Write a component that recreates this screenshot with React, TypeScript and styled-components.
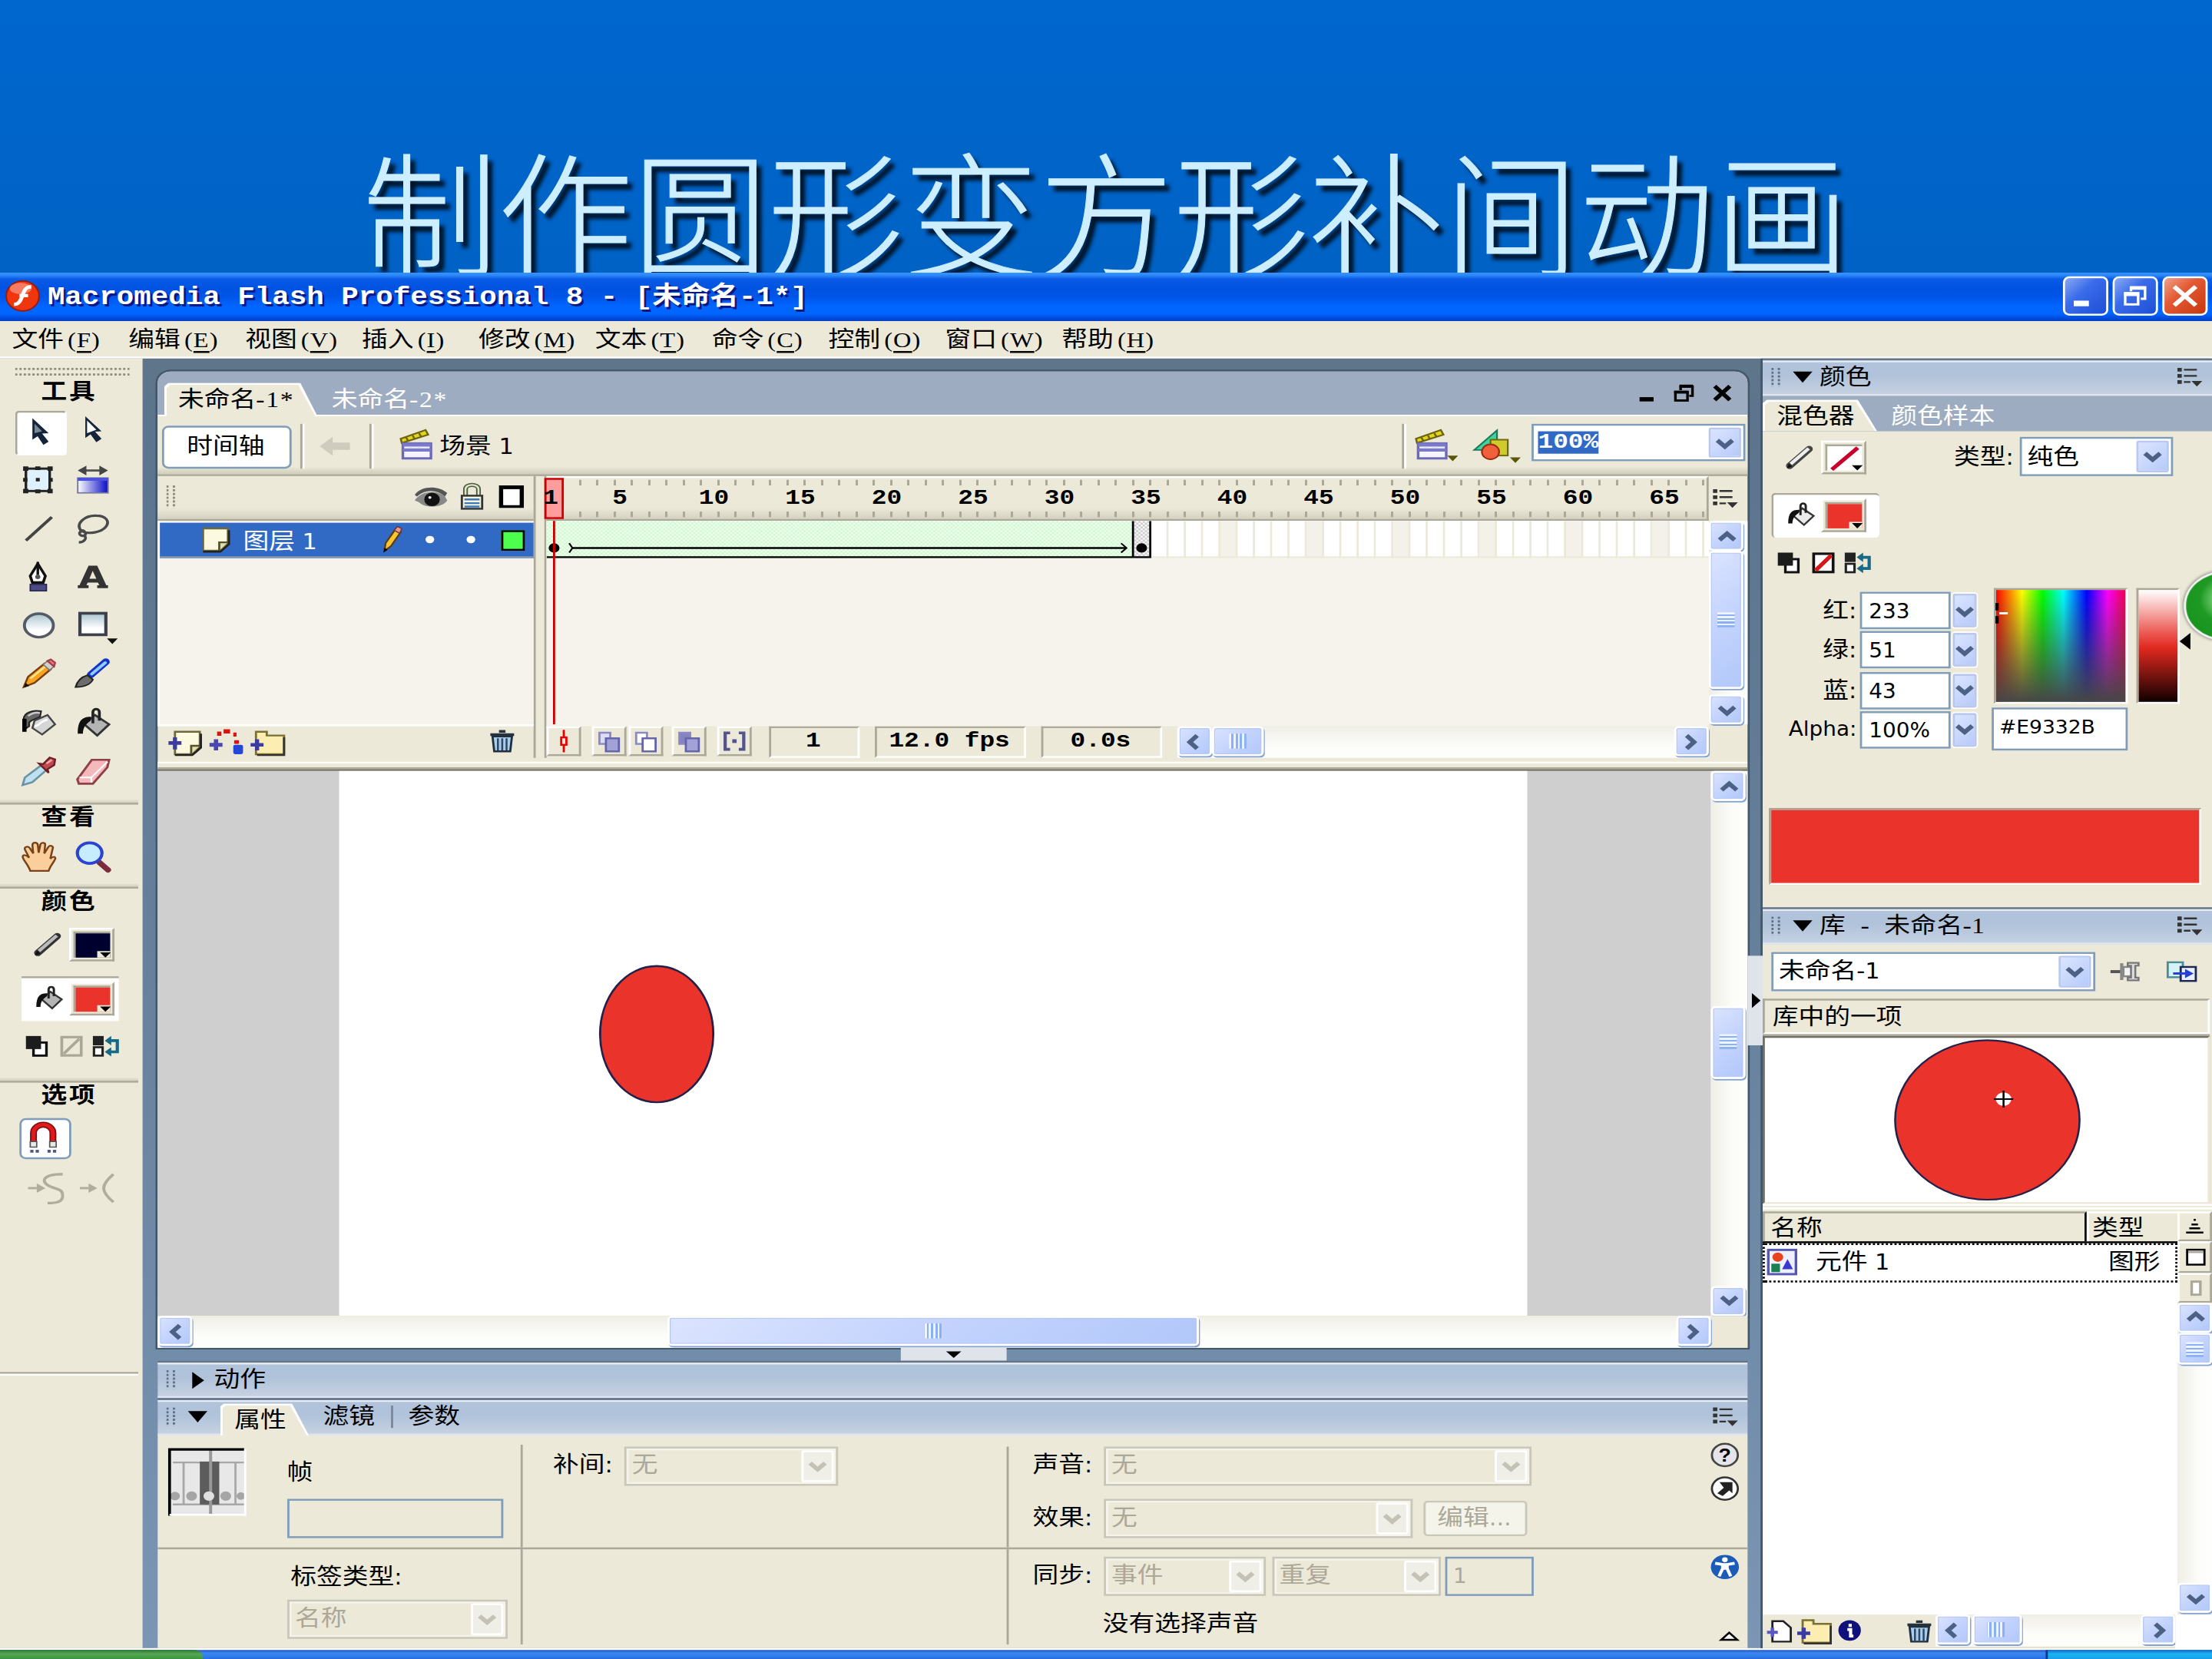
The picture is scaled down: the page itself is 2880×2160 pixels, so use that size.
import React from 'react';
import styled, { createGlobalStyle, css } from 'styled-components';

const Color = {
    Face: '#ece9d8',
    Line: '#aca899',
    Dark: '#716f64',
    Paper: '#f6f3ec',
    Field: '#7f9db9',
    Tab: '#9dacc0',
    Select: '#316ac5',
    Red: '#e9332b',
    Chevron: '#4d6185',
    Stage: '#cfcfcf',
};

const Font = {
    song: '"Liberation Serif", "Noto Sans CJK SC", sans-serif',
    tahoma: '"DejaVu Sans Condensed", "DejaVu Sans", "Noto Sans CJK SC", sans-serif',
    mono: '"Liberation Mono", "Noto Sans CJK SC", monospace',
};

const GlobalStyle = createGlobalStyle`
    html, body { margin: 0; padding: 0; overflow: hidden; background: #0066cc; }
    *, *::before, *::after { box-sizing: border-box; }
    svg { display: block; flex-shrink: 0; overflow: visible; }
`;

/* ---------- slide ---------- */

const Slide = styled.div`
    width: 2880px;
    height: 2160px;
    overflow: hidden;
    background: linear-gradient(#0067cf, #0062c4 355px);
`;

const Heading = styled.h1`
    margin: 0;
    height: 355px;
    padding-top: 177px;
    overflow: hidden;
    text-align: center;
    white-space: nowrap;
    color: #cceeff;
    font: 300 176px/190px "Noto Sans CJK SC", sans-serif;
    -webkit-text-stroke: 1px #cceeff;
    text-shadow: 7px 8px 5px #001428;
`;

// The desktop keeps its native 1024px grid and is stretched to fill the slide.
const Desktop = styled.div`
    width: 1024px;
    height: 768px;
    transform: scale(2.8125, 2.43);
    transform-origin: 0 0;
    display: flex;
    flex-direction: column;
    font: 400 12px/14px ${Font.song};
    color: #000;
    white-space: nowrap;
    background: ${Color.Face};
`;

/* ---------- title and menu ---------- */

const TitleBar = styled.div`
    height: 26px;
    flex-shrink: 0;
    display: flex;
    align-items: center;
    padding: 0 2px 1px 2px;
    background: linear-gradient(#3a93ff 0, #2a86f8 1.5px, #0a5be6 3.5px, #0053e1 8px, #0055e8 13px, #0066ff 18px, #0066ff 22px, #0046d5 25px, #003dc9 26px);
`;

const TitleText = styled.div`
    flex: 1;
    padding: 2px 0 0 4px;
    color: #fff;
    font: 700 13.34px/16px ${Font.mono};
    text-shadow: 1px 1px 0 #0a1883;
`;

const CaptionButton = styled.div<{ $close?: boolean }>`
    width: 21px;
    height: 21px;
    margin-left: 2px;
    border: 1px solid #fff;
    border-radius: 3px;
    display: flex;
    align-items: center;
    justify-content: center;
    background: ${p => (p.$close
        ? 'linear-gradient(135deg, #f0a088, #e35a34 40%, #c8380f)'
        : 'linear-gradient(135deg, #8aa9f4, #3a6cea 40%, #1d4ed6)')};
`;

const MenuBar = styled.div`
    height: 20px;
    flex-shrink: 0;
    display: flex;
    align-items: center;
    padding-left: 5.5px;
    border-bottom: 1px solid #fff;
    background: ${Color.Face};
`;

const MenuItem = styled.div`
    width: 54px;
    line-height: 16px;
`;

const Hotkey = styled.span`
    margin-left: 1.8px;
    letter-spacing: 0.4px;
    font-size: 11.5px;
    u { text-underline-offset: 1.5px; }
`;

/* ---------- shared parts ---------- */

const Body = styled.div`
    height: 690.5px;
    flex-shrink: 0;
    display: flex;
    background: linear-gradient(#5f7589, #5c748d 5%, #66809b 45%, #7a96b4);
`;

const Grip = styled.div<{ $w: number; $h: number; $pale?: boolean }>`
    width: ${p => p.$w}px;
    height: ${p => p.$h}px;
    flex-shrink: 0;
    background:
        radial-gradient(circle at 0.5px 0.5px, ${p => (p.$pale ? '#5f6f86' : '#8f8c7c')} 0.6px, transparent 0.7px) 0 0 /
        ${p => (p.$w > p.$h ? '2px 3px' : '3px 2px')};
`;

const Bold = styled.div`
    font-weight: 700;
    letter-spacing: 1px;
    text-align: center;
`;

const scrollSkin = css`
    border: 1px solid #fff;
    border-radius: 2px;
    background: linear-gradient(135deg, #dbe4ff, #c3d3fd 50%, #b2c8fa);
    box-shadow: inset 0 0 0 0.5px #b6c8f4, 0.5px 0.8px 0 #86a3d6;
    display: flex;
    align-items: center;
    justify-content: center;
    flex-shrink: 0;
`;

const Track = styled.div<{ $vertical?: boolean; $size: number; $length?: number }>`
    display: flex;
    flex-direction: ${p => (p.$vertical ? 'column' : 'row')};
    flex-shrink: 0;
    width: ${p => (p.$vertical ? `${p.$size}px` : p.$length ? `${p.$length}px` : 'auto')};
    height: ${p => (p.$vertical ? (p.$length ? `${p.$length}px` : 'auto') : `${p.$size}px`)};
    background: linear-gradient(${p => (p.$vertical ? 'to right' : 'to bottom')}, #efeee6, #fcfcf9 60%, #fefefc);
`;

const ScrollButton = styled.div`
    ${scrollSkin}
    width: 16px;
    height: 16px;
`;

const Thumb = styled.div<{ $vertical?: boolean; $size: number }>`
    ${scrollSkin}
    width: ${p => (p.$vertical ? 16 : p.$size)}px;
    height: ${p => (p.$vertical ? p.$size : 16)}px;
`;

const ThumbMark = styled.div<{ $vertical?: boolean }>`
    width: 8px;
    height: 8px;
    background: repeating-linear-gradient(${p => (p.$vertical ? 'to bottom' : 'to right')}, #eef4fe 0 1px, #8cb0f8 1px 2px);
`;

const Space = styled.div<{ $size?: number }>`
    flex: ${p => (p.$size === undefined ? '1' : `0 0 ${p.$size}px`)};
`;

const Chevron = ({ dir = 'down', color = Color.Chevron }: { dir?: string; color?: string }) => {
    const turn = { down: 0, left: 90, up: 180, right: 270 }[dir];
    return (
        <svg width="9" height="9" viewBox="0 0 9 9">
            <path
                d="M1 2.8 L4.5 6.2 L8 2.8"
                fill="none"
                stroke={color}
                strokeWidth="2.2"
                transform={`rotate(${turn} 4.5 4.5)`}
            />
        </svg>
    );
};

interface ScrollBarProps {
    vertical?: boolean
    size?: number
    length?: number
    before: number
    thumb: number
}

const ScrollBar = ({ vertical, size = 17, length, before, thumb }: ScrollBarProps) => (
    <Track $vertical={vertical} $size={size} $length={length}>
        <ScrollButton><Chevron dir={vertical ? 'up' : 'left'} /></ScrollButton>
        <Space $size={before} />
        <Thumb $vertical={vertical} $size={thumb}><ThumbMark $vertical={vertical} /></Thumb>
        <Space />
        <ScrollButton><Chevron dir={vertical ? 'down' : 'right'} /></ScrollButton>
    </Track>
);

const ComboBox = styled.div<{ $w: number; $h: number; $disabled?: boolean }>`
    width: ${p => p.$w}px;
    height: ${p => p.$h}px;
    flex-shrink: 0;
    display: flex;
    align-items: center;
    justify-content: space-between;
    padding: 0 1px 0 2.5px;
    border: 1px solid ${p => (p.$disabled ? '#c9c7ba' : Color.Field)};
    color: ${p => (p.$disabled ? Color.Line : '#000')};
    background: ${p => (p.$disabled ? Color.Face : '#fff')};
    box-shadow: ${p => (p.$disabled ? 'inset 0 0 0 1px #f5f3ea' : 'none')};
    font-family: ${Font.tahoma};
`;

const ComboArrow = styled.div<{ $disabled?: boolean }>`
    width: 15px;
    height: calc(100% - 2px);
    display: flex;
    align-items: center;
    justify-content: center;
    border-radius: 1px;
    border: ${p => (p.$disabled ? '1px solid #fff' : '0.5px solid #b8c8f0')};
    background: ${p => (p.$disabled ? '#f0efe7' : 'linear-gradient(135deg, #dbe5ff, #b6cafa)')};
`;

interface ComboProps {
    w: number
    h?: number
    disabled?: boolean
    children: React.ReactNode
}

const Combo = ({ w, h = 21, disabled, children }: ComboProps) => (
    <ComboBox $w={w} $h={h} $disabled={disabled}>
        <span>{children}</span>
        <ComboArrow $disabled={disabled}><Chevron color={disabled ? '#c4c2b5' : Color.Chevron} /></ComboArrow>
    </ComboBox>
);

const Input = styled.div<{ $w: number; $h: number; $disabled?: boolean; $font?: number }>`
    width: ${p => p.$w}px;
    height: ${p => p.$h}px;
    flex-shrink: 0;
    padding: 2px 0 0 3px;
    border: 1px solid ${Color.Field};
    background: ${p => (p.$disabled ? Color.Face : '#fff')};
    color: ${p => (p.$disabled ? Color.Line : '#000')};
    font: 400 ${p => p.$font || 11}px/15px ${Font.tahoma};
`;

const PanelMenu = () => (
    <svg width="12" height="10" viewBox="0 0 12 10">
        <path d="M0 0h2v2H0zM0 3.3h2v2H0zM0 6.6h2v2H0zM3 .5h6v1H3zM3 3.8h6v1H3zM3 7.1h3v1H3zM6.5 7h5L9 10z" fill="#333" />
    </svg>
);

const TabShape = styled.div<{ $w: number; $h: number; $slope: number }>`
    position: relative;
    z-index: 0;
    width: ${p => p.$w}px;
    height: ${p => p.$h}px;
    flex-shrink: 0;
    padding: 1.5px 0 0 6.5px;
    &::before, &::after {
        content: '';
        position: absolute;
        z-index: -1;
        inset: 0;
        background: #fff;
        clip-path: polygon(0 2px, 2px 0, calc(100% - ${p => p.$slope}px) 0, 100% 100%, 0 100%);
    }
    &::after {
        inset: 1px 1px 0 1px;
        background: ${Color.Face};
    }
`;

/* ---------- toolbox ---------- */

const ToolPanel = styled.div`
    width: 66px;
    padding-top: 5px;
    background: ${Color.Face};
    display: flex;
    flex-direction: column;
    flex-shrink: 0;
`;

const ToolGrip = styled.div`
    padding: 0 0 0 7px;
    height: 6px;
`;

const ToolTitle = styled(Bold)`
    height: 14px;
    width: 64px;
    line-height: 15.6px;
`;

const ToolGrid = styled.div`
    display: grid;
    grid-template-columns: 24px 24px;
    grid-auto-rows: 24px;
    gap: 2px 1px;
    padding: 3px 0 0 7px;
`;

const ToolCell = styled.div<{ $active?: boolean }>`
    display: flex;
    align-items: center;
    justify-content: center;
    padding: 0 1.2px 1.2px 0;
    border-radius: 2px;
    border: 1px solid transparent;
    ${p => p.$active && css`
        background: #fff;
        border-color: #aca899 #fff #fff #aca899;
    `}
`;

const Divider = styled.div<{ $gap: number }>`
    width: 64px;
    height: 3.5px;
    flex-shrink: 0;
    margin-top: ${p => p.$gap}px;
    border-bottom: 1px solid ${Color.Line};
    background: linear-gradient(${Color.Face}, #d3cfbf);
`;

const SwatchRow = styled.div<{ $active?: boolean; $w?: number; $left?: number; $pad?: number; $h?: number; $round?: boolean }>`
    display: flex;
    align-items: center;
    gap: 3px;
    width: ${p => p.$w || 45}px;
    height: ${p => p.$h || 24}px;
    margin-left: ${p => p.$left || 10}px;
    padding-left: ${p => p.$pad || 5.5}px;
    padding-bottom: 1px;
    border-top: 1px solid ${p => (p.$active ? Color.Line : 'transparent')};
    border-left: ${p => (p.$round ? `1px solid ${p.$active ? Color.Line : 'transparent'}` : '0')};
    border-radius: ${p => (p.$round ? 2 : 0)}px;
    background: ${p => (p.$active ? '#fff' : 'transparent')};
`;

const SwatchFrame = styled.div`
    width: 21px;
    height: 18px;
    padding: 1px;
    border: 1px solid;
    border-color: #fff ${Color.Line} ${Color.Line} #fff;
    background: ${Color.Face};
    svg { border-top: 1px solid ${Color.Line}; border-left: 1px solid ${Color.Line}; }
`;

const Swatch = ({ color, none }: { color?: string; none?: boolean }) => (
    <SwatchFrame>
        <svg width="17" height="14" viewBox="0 0 16 13">
            <rect width="16" height="13" fill={color || '#fff'} />
            {none && <path d="M2 12.5L14 .8" stroke="#c8002a" strokeWidth="2" />}
            <path d="M10 13V9.5h6V13z" fill={none ? '#fff' : Color.Face} />
            <path d="M11.3 10.2h5L13.8 13z" fill="#000" />
        </svg>
    </SwatchFrame>
);

const MiniRow = styled.div<{ $left: number; $gap: number }>`
    display: flex;
    gap: ${p => p.$gap}px;
    padding: 8px 0 0 ${p => p.$left}px;
    height: 21px;
`;

const SnapButton = styled.div`
    width: 24px;
    height: 22px;
    margin: 4.5px 0 0.5px 9px;
    border: 1px solid ${Color.Field};
    border-radius: 3px;
    background: #fff;
    display: flex;
    align-items: center;
    justify-content: center;
    padding: 0 1.5px 1px 0;
`;

const GhostRow = styled.div`
    display: flex;
    gap: 8px;
    padding: 8px 0 0 13px;
    height: 113.8px;
`;

const BottomRule = styled.div`
    width: 64px;
    height: 2px;
    border-top: 1px solid ${Color.Line};
    border-bottom: 1px solid #fff;
`;

const ico = { width: 16, height: 16, viewBox: '0 0 16 16' };

const ArrowIcon = () => (
    <svg {...ico}>
        <path d="M5 1l7.5 8-3 .2 3 4.3-2.4 1.8-2.7-4.6L5 12.5z" fill="#14243a" />
        <path d="M6 4l3.5 4L6 9z" fill="#7d8796" />
    </svg>
);
const SubArrowIcon = () => (
    <svg {...ico}>
        <path d="M4.5 0l7.5 8-3 .2 3 3.8-2.4 1.8-2.7-4.2-2.4 2z" fill="#14243a" />
        <path d="M5.3 2.2l4.3 5L5.3 9z" fill="#fff" />
    </svg>
);
const TransformIcon = () => (
    <svg {...ico}>
        <rect x="2" y="2" width="11" height="12" fill="#dff1fd" stroke="#222" strokeWidth="1.2" />
        <path d="M.7.8h2.4v2.4H.7zM6.3.8h2.4v2H6.3zM12 .8h2.4v2.4H12zM.7 7h2v2h-2zM12.4 7h2v2h-2zM.7 12.8h2.4v2.4H.7zM6.3 13.2h2.4v2H6.3zM12 12.8h2.4v2.4H12zM6.6 7h1.8v1.8H6.6z" fill="#222" />
    </svg>
);
const GradientIcon = () => (
    <svg {...ico}>
        <defs>
            <linearGradient id="blue"><stop offset="0" stopColor="#fff" /><stop offset="1" stopColor="#0a0ac8" /></linearGradient>
        </defs>
        <path d="M3 3h10" stroke="#555" strokeWidth="1.2" />
        <path d="M1 3l4-2.6v5.2zM15 3l-4-2.6v5.2z" fill="#444" />
        <rect x="1" y="7" width="14" height="8" fill="url(#blue)" stroke="#77779c" strokeWidth=".7" />
        <path d="M1 7.7h14" stroke="#4a50e0" strokeWidth="1.6" />
    </svg>
);
const LineIcon = () => <svg {...ico}><path d="M2 14.5L14 2" stroke="#444" strokeWidth="1.5" /></svg>;
const LassoIcon = () => (
    <svg {...ico}>
        <path
            d="M3 10C-1 5 5 1 9.5 1.2c4.5 0 6.5 3 4.5 6-2 3-8 4-10.500 2.500-2.500-.5-2 2.500 0 2.300 2.500-.4 0-4-1-2.500M4 12c1.500 1 0 3.500-2.500 3.500"
            fill="none"
            stroke="#4a4a4a"
            strokeWidth="1.3"
        />
    </svg>
);
const PenIcon = () => (
    <svg {...ico}>
        <path d="M7.500 1L4 7.500 5 11h5l1-3.500z" fill="#fff" stroke="#111" strokeWidth="1.3" />
        <path d="M7.500 0v7" stroke="#111" strokeWidth="1.2" />
        <circle cx="7.500" cy="8" r="1.2" fill="#555" />
        <rect x="4" y="12" width="7.500" height="3.500" fill="#4b4b86" stroke="#222244" strokeWidth=".6" />
    </svg>
);
const TextIcon = () => (
    <svg {...ico}><path d="M6 2h4l4.200 10.500H15V14h-5v-1.500h1L10.300 11H5.600L5 12.500h1V14H1v-1.500h.8zM7.900 4.800L6.400 9h3.200z" fill="#333" fillRule="evenodd" /></svg>
);
const OvalIcon = () => (
    <svg {...ico}><ellipse cx="8" cy="8" rx="6.700" ry="6.300" fill="url(#glass)" stroke="#555b66" strokeWidth="1.4" /></svg>
);
const RectIcon = () => (
    <svg {...ico}>
        <defs>
            <linearGradient id="glass" x2="0" y2="1"><stop offset="0" stopColor="#a9c4cf" /><stop offset=".7" stopColor="#fff" /></linearGradient>
        </defs>
        <rect x="2" y="1.500" width="12" height="11.500" fill="url(#glass)" stroke="#3c404a" strokeWidth="1.5" />
        <path d="M14.500 15h5L17 18z" fill="#111" />
    </svg>
);
const PencilIcon = () => (
    <svg {...ico}>
        <path d="M1 15l2-5.500 7.500-7 3 3L6 12.800z" fill="#f7a51b" stroke="#7c3c12" strokeWidth=".9" />
        <path d="M4 10.500l7-6.500" stroke="#ffe39a" />
        <path d="M10 3l2-2 3 3-2 2z" fill="#d0d0d0" stroke="#777" strokeWidth=".6" />
        <path d="M12 1l1.500-.8 2 1.800-.5 2z" fill="#ef7b80" stroke="#a64046" strokeWidth=".9" />
        <path d="M1 15.300l.8-2.500 1.800 1.600z" fill="#111" />
    </svg>
);
const BrushIcon = () => (
    <svg {...ico}>
        <path d="M7 8.500L14 1.500" stroke="#1433c8" strokeWidth="3.600" strokeLinecap="round" />
        <path d="M7.500 8L13.700 2" stroke="#8ecbff" strokeWidth="1.500" strokeLinecap="round" />
        <path d="M0 15c1-4 3-5.500 5.500-6.300L8 11c-1 2.500-4 4-8 4z" fill="#6c6c6c" stroke="#222" strokeWidth=".8" />
    </svg>
);
const InkIcon = () => (
    <svg {...ico}>
        <path d="M1 12V6c0-3 4-5 8-4l-.5 3-4 2-1 1V10z" fill="#666" stroke="#222" strokeWidth=".8" />
        <path d="M3 4.500c2-1.500 4-2 5.500-1.500" stroke="#ccc" fill="none" strokeWidth=".9" />
        <path d="M6 7l6-3 3.500 5-6 5.500-4.500-3.500z" fill="#d6d6d6" stroke="#444" strokeWidth=".9" />
        <path d="M6 10c2 0 3-3 6-3.500" stroke="#fff" fill="none" />
        <path d="M1.300 6v7" stroke="#000" strokeWidth="2" />
    </svg>
);
const BucketIcon = ({ size = 16, light }: { size?: number; light?: boolean }) => (
    <svg width={size} height={size} viewBox="0 0 16 16">
        <path d="M4 9l5-5 6.500 5-5.500 6z" fill={light ? '#ececec' : '#b4b4b4'} stroke="#333" strokeWidth="1.1" />
        <path d="M8 8.500V2.500C8 .3 11 .3 11 2.500V7" fill="none" stroke="#222" strokeWidth="1.3" />
        <path d="M7 5C3 5 1 7 1 14h2.400c0-3 1-5 3.600-7z" fill="#111" />
    </svg>
);
const DropperIcon = () => (
    <svg {...ico}>
        <path d="M.5 15.500l1-4L9 5l2.500 2.500L5 14z" fill="#bfe0ee" stroke="#6b93a8" strokeWidth="1" />
        <path d="M8 4l2 .3L13 .8l2.500 1-.4 3L12 7l.5 2z" fill="#c04a50" stroke="#6d1f26" strokeWidth=".9" />
        <path d="M11.500 4L14 2" stroke="#f0a8a8" />
    </svg>
);
const EraserIcon = () => (
    <svg {...ico}>
        <path d="M.8 12.500L7.500 2H15.500l-.8 4L8 14.800H1.500z" fill="#f5b9bb" stroke="#8e4046" strokeWidth="1.1" />
        <path d="M1.800 11.500h5.500L14.800 3M7.300 11.500v2.800" stroke="#fff" strokeWidth=".8" fill="none" />
    </svg>
);
const HandIcon = () => (
    <svg {...ico}>
        <path
            d="M4 15.500C3 12 .5 9.500.5 8s2-1 3 .5L1.500 4c-.3-1.500 1.700-2 2.400-.5l1.500 2.700L5 1.600C5.200 0 7.200 0 7.500 1.500l.4 4.300.8-4.500c.5-1.300 2.400-1 2.200.4l-.4 4.500 1.900-3.500c.9-1.200 2.500-.4 2 .9L13.300 9c.8-1 2.500-1.500 2.300 0C15 11 13.500 12 12.500 15.500z"
            fill="#fbcf9c"
            stroke="#7a4216"
            strokeWidth=".9"
        />
    </svg>
);
const ZoomIcon = () => (
    <svg {...ico}>
        <path d="M11 11l4 4" stroke="#7c2c3c" strokeWidth="2.800" strokeLinecap="round" />
        <ellipse cx="6.500" cy="6" rx="5.700" ry="5.500" fill="#c6ecff" stroke="#2b43cf" strokeWidth="1.500" />
    </svg>
);
const StrokeIcon = ({ light }: { light?: boolean }) => (
    <svg width="13" height="13" viewBox="0 0 13 13">
        <path d="M1.500 11.500L10.500 2.500" stroke={light ? '#444' : '#333'} strokeWidth="3.400" strokeLinecap="round" />
        <path d="M2 10.500L10.300 2.200" stroke={light ? '#eee' : '#bbb'} strokeWidth="1.700" />
        <path d="M.3 12.700l.8-2.400 1.600 1.600z" fill="#111" />
    </svg>
);
const SwapColors = () => (
    <svg width="10" height="11" viewBox="0 0 10 11">
        <rect x="3.500" y="3.500" width="6" height="7" fill="#fff" stroke="#111" strokeWidth="1.2" />
        <rect x="0" y="0" width="7" height="7" fill="#1c1c1c" />
    </svg>
);
const NoColor = ({ red }: { red?: boolean }) => (
    <svg width="10" height="11" viewBox="0 0 10 11">
        <rect x=".6" y=".6" width="9" height="9.800" fill={red ? '#fff' : 'none'} stroke={red ? '#111' : '#aaa797'} strokeWidth="1.3" />
        <path d="M1.500 9.500L8.700 1.500" stroke={red ? '#d81818' : '#aaa797'} strokeWidth={red ? 2 : 1.4} />
    </svg>
);
const ExchangeIcon = () => (
    <svg width="12" height="11" viewBox="0 0 12 11">
        <rect width="5" height="5" fill="#222" />
        <rect x=".5" y="6" width="4" height="4.500" fill="#fff" stroke="#222" strokeWidth="1.1" />
        <path d="M7 2.500h4.300v6H7" fill="none" stroke="#176a86" strokeWidth="1.500" />
        <path d="M5.500 2.500l3-2.500v5zM5.500 8.500l3-2.500v5z" fill="#176a86" />
    </svg>
);
const MagnetIcon = () => (
    <svg width="12" height="17" viewBox="0 0 12 17">
        <path d="M1.500 11V6a4.500 4.500 0 019 0v5" fill="none" stroke="#7d0d12" strokeWidth="3.2" />
        <path d="M1.500 11V6a4.500 4.500 0 019 0v5" fill="none" stroke="#e01a1a" strokeWidth="1.900" />
        <path d="M0 10.500h3v3H0zM9 10.500h3v3H9z" fill="#e8e8e8" stroke="#555" strokeWidth=".6" />
        <path d="M0 15h1.500v1.500H0zM2.500 15H4v1.500H2.500zM8 15h1.500v1.500H8zM10.500 15H12v1.500h-1.500z" fill="#4a5a88" />
    </svg>
);
const GhostIcon = ({ d }: { d: string }) => (
    <svg width="16" height="17" viewBox="0 0 16 17">
        <path d="M0 7.500h4" stroke="#b0ad9e" strokeWidth="1.200" />
        <path d="M4 5l4 2.500-4 2.500z" fill="#b0ad9e" />
        <path d={d} fill="none" stroke="#b0ad9e" strokeWidth="1.400" />
    </svg>
);

const tools = [
    ArrowIcon, SubArrowIcon, TransformIcon, GradientIcon, LineIcon, LassoIcon, PenIcon, TextIcon,
    OvalIcon, RectIcon, PencilIcon, BrushIcon, InkIcon, BucketIcon, DropperIcon, EraserIcon,
];

const Toolbox = () => (
    <ToolPanel>
        <ToolGrip><Grip $w={53} $h={5} /></ToolGrip>
        <ToolTitle>工具</ToolTitle>
        <ToolGrid>
            {tools.map((Icon, i) => <ToolCell key={i} $active={i === 0}><Icon /></ToolCell>)}
        </ToolGrid>
        <Divider $gap={1.5} />
        <ToolTitle>查看</ToolTitle>
        <ToolGrid>
            <ToolCell><HandIcon /></ToolCell>
            <ToolCell><ZoomIcon /></ToolCell>
        </ToolGrid>
        <Divider $gap={0.5} />
        <ToolTitle>颜色</ToolTitle>
        <SwatchRow $h={31}><StrokeIcon /><Swatch color="#00002e" /></SwatchRow>
        <Space $size={1.5} />
        <SwatchRow $active><BucketIcon size={13} /><Swatch color={Color.Red} /></SwatchRow>
        <MiniRow $left={12} $gap={5.5}><SwapColors /><NoColor /><ExchangeIcon /></MiniRow>
        <Divider $gap={9} />
        <ToolTitle>选项</ToolTitle>
        <SnapButton><MagnetIcon /></SnapButton>
        <GhostRow>
            <GhostIcon d="M16 0C6 0 6 4.500 10 6.500s6 1.500 6 5-3 4-7 4" />
            <GhostIcon d="M15.500 0c-6 6-6 9 0 15" />
        </GhostRow>
        <BottomRule />
    </ToolPanel>
);

/* ---------- document ---------- */

const Center = styled.div`
    width: 736px;
    margin: 0 7px;
    padding-top: 7px;
    flex-shrink: 0;
    display: flex;
    flex-direction: column;
`;

const DocWindow = styled.div`
    height: 523px;
    flex-shrink: 0;
    display: flex;
    flex-direction: column;
    border-radius: 6px 6px 0 0;
    background: ${Color.Face};
    box-shadow: 0 0 0 1px #43576a;
`;

const DocTabs = styled.div`
    height: 24px;
    flex-shrink: 0;
    display: flex;
    align-items: flex-end;
    padding: 0 7.5px 0 3px;
    border-radius: 6px 6px 0 0;
    border-bottom: 1px solid #fff;
    background: ${Color.Tab};
`;

const DocTab = styled(TabShape)`
    margin-bottom: -1px;
`;

const IdleTab = styled.div`
    flex: 1;
    height: 17px;
    padding: 1.5px 0 0 6.5px;
    color: #fff;
`;

const StarSuffix = styled.span`
    letter-spacing: 0.6px;
`;

const WindowIcons = styled.div`
    display: flex;
    align-items: flex-end;
    gap: 9px;
    padding-bottom: 7px;
`;

const EditBar = styled.div`
    height: 32px;
    flex-shrink: 0;
    display: flex;
    align-items: flex-start;
    padding: 4px 1px 0 2px;
    border-bottom: 1px solid ${Color.Line};
    background: linear-gradient(${Color.Face} 27px, #cfcbb9 31px);
`;

const TimelineButton = styled.div`
    width: 60px;
    height: 23px;
    margin-top: 1px;
    border: 1px solid ${Color.Field};
    border-radius: 3px;
    background: #fff;
    line-height: 21px;
    text-align: center;
    padding-right: 1px;
`;

const BarSeparator = styled.div<{ $left: number; $right: number }>`
    width: 2px;
    height: 24px;
    margin: 0 ${p => p.$right}px 0 ${p => p.$left}px;
    border-left: 1px solid ${Color.Line};
    border-right: 1px solid #fff;
`;

const EditIcon = styled.div<{ $w: number }>`
    width: ${p => p.$w}px;
    padding-top: 3px;
`;

const SceneName = styled.div`
    flex: 1;
    padding-top: 5px;
    font-family: ${Font.tahoma};
`;

const ZoomField = styled.div`
    padding-top: 0.3px;
`;

const Selected = styled.span`
    background: ${Color.Select};
    color: #fff;
    font: 700 11.67px/12px ${Font.mono};
    display: block;
    margin-bottom: 1px;
`;

const Clapper = () => (
    <svg width="15" height="16" viewBox="0 0 15 16">
        <path d="M.5 5L12 .3l1.200 2.500L1 7.300z" fill="#e3d51a" stroke="#6b6410" strokeWidth=".9" />
        <path d="M3 4.300l1 2M6 3.200l1 2M9 2l1 2" stroke="#6b6410" strokeWidth=".9" />
        <rect x="1.500" y="7.500" width="13" height="8" fill="#f4f4ff" stroke="#6a68b8" strokeWidth="1.200" />
        <path d="M1.500 8.300h13M1.500 11h13" stroke="#7c7ac6" strokeWidth="1.800" />
        <path d="M4 9.700h2M8 9.700h2M12 9.700h1" stroke="#dcdcff" strokeWidth=".8" />
    </svg>
);

const DropMark = () => <svg width="5" height="3" viewBox="0 0 5 3"><path d="M0 0h5L2.500 3z" fill="#5b5507" /></svg>;

const WithMark = styled.div`
    display: flex;
    align-items: flex-end;
    svg + svg { margin-bottom: -1px; }
`;

const Shapes = () => (
    <svg width="17" height="17" viewBox="0 0 17 17">
        <path d="M11 .5V11H.5z" fill="#3fd29c" stroke="#1c7a5c" strokeWidth=".8" />
        <rect x="8" y="5.500" width="8" height="8.500" fill="#cfcb2c" stroke="#6d6a0e" strokeWidth=".8" />
        <circle cx="8" cy="12" r="4" fill="#f0603a" stroke="#9c2c12" strokeWidth=".8" />
    </svg>
);

/* ---------- timeline ---------- */

const Timeline = styled.div`
    height: 158px;
    flex-shrink: 0;
    display: grid;
    grid-template-columns: 174px 6px 538px 18px;
    grid-template-rows: 24px 110px 24px;
    border-bottom: 1px solid ${Color.Dark};
    box-shadow: inset 0 -1px 0 ${Color.Line}, inset 0 -3px 0 ${Color.Face}, inset 0 -4px 0 #fff;
`;

const LayerHead = styled.div`
    display: flex;
    align-items: center;
    padding: 0 4.5px 1px 4px;
    border-bottom: 1px solid ${Color.Line};
    background: linear-gradient(${Color.Face} 17px, #d5d1c0);
`;

const Gutter = styled.div`
    grid-row: 1 / 4;
    grid-column: 2;
    height: 151px;
    border-left: 1px solid ${Color.Line};
    border-right: 1px solid ${Color.Line};
`;

const Ruler = styled.div`
    position: relative;
    border-top: 1px solid #fff;
    border-right: 1px solid ${Color.Line};
    border-bottom: 1px solid ${Color.Line};
    padding-top: 3.5px;
    background:
        repeating-linear-gradient(to right, transparent 0 7px, ${Color.Line} 7px 8px) 0 0.5px / 100% 3px no-repeat,
        repeating-linear-gradient(to right, transparent 0 7px, ${Color.Line} 7px 8px) 0 18px / 100% 3px no-repeat,
        linear-gradient(${Color.Face} 16px, #d5d1c0);
`;

const Numbers = styled.div`
    position: relative;
    display: flex;
    margin-left: -1.5px;
    font: 700 11.67px/15px ${Font.mono};
`;

const FrameNumber = styled.div<{ $frames: number }>`
    width: ${p => p.$frames * 8}px;
`;

const Playhead = styled.div`
    position: absolute;
    left: -1px;
    top: 0;
    width: 9px;
    height: 22px;
    border: 1px solid #c00;
    background: #ff9c9c;
`;

const RulerMenu = styled.div`
    grid-column: 4;
    padding: 7px 0 0 2px;
`;

const Layers = styled.div`
    padding-top: 1px;
    border: 1px solid #fff;
    border-width: 0 0 1px 1px;
    background: ${Color.Paper};
`;

const LayerRow = styled.div`
    height: 19px;
    display: flex;
    align-items: center;
    padding: 0 4px 0 19px;
    border-bottom: 1px solid #8f9bb0;
    background: ${Color.Select};
    color: #fff;
    font-family: ${Font.tahoma};
`;

const LayerName = styled.div`
    width: 70px;
    padding: 1px 0 0 5.5px;
`;

const Dot = styled.div<{ $right: number }>`
    width: 4px;
    height: 4px;
    margin-right: ${p => p.$right}px;
    border-radius: 2px;
    background: #fff;
`;

const GreenBox = styled.div`
    width: 11px;
    height: 11px;
    border: 1px solid #000;
    background: #4cff4c;
`;

const Frames = styled.div`
    grid-column: 3;
    position: relative;
    background: ${Color.Paper};
`;

const FrameStrip = styled.div`
    height: 20px;
    display: flex;
    overflow: hidden;
    background: #fff;
`;

const Frame = styled.div<{ $fifth?: boolean }>`
    flex: 0 0 8px;
    border-right: 1px solid ${Color.Face};
    border-bottom: 1px solid ${Color.Face};
    background: ${p => (p.$fifth ? '#f4f1ea' : '#fff')};
`;

const PlayheadLine = styled.div`
    position: absolute;
    left: 3px;
    top: 0;
    width: 1px;
    height: 109px;
    background: #c00;
`;

const LayerTools = styled.div`
    grid-column: 1;
    display: flex;
    padding: 1.5px 9px 0 5px;
    gap: 3px;
`;

const StatusBar = styled.div`
    grid-column: 3 / 5;
    display: flex;
    align-items: flex-start;
    font: 700 11.67px/15px ${Font.mono};
`;

const StatusButton = styled.div<{ $right: number }>`
    width: 16px;
    height: 16px;
    margin-right: ${p => p.$right}px;
    display: flex;
    align-items: center;
    justify-content: center;
    border: 1px solid;
    border-color: #fff ${Color.Line} ${Color.Line} #fff;
`;

const StatusField = styled.div<{ $w: number; $right: number }>`
    width: ${p => p.$w}px;
    height: 17px;
    margin-right: ${p => p.$right}px;
    border: 1px solid;
    border-color: ${Color.Line} #fff #fff ${Color.Line};
    text-align: center;
`;

const Onion = ({ a, b }: { a: string; b: string }) => (
    <svg width="10" height="11" viewBox="0 0 10 11">
        <rect x=".5" y=".5" width="5" height="6" fill={a} stroke="#8a88c8" />
        <rect x="3.500" y="3.500" width="6" height="7" fill={b} stroke="#6664a8" />
    </svg>
);

const frameMarks = [1, 5, 10, 15, 20, 25, 30, 35, 40, 45, 50, 55, 60, 65];
const emptyFrames = Array.from({ length: 33 }, (_, i) => i + 36);

const Tween = () => (
    <svg width="280" height="20" viewBox="0 0 280 20">
        <defs>
            <pattern id="mesh" width="2" height="2" patternUnits="userSpaceOnUse">
                <rect width="2" height="2" fill="#f0fff0" /><path d="M0 0h1v1H0zM1 1h1v1H1z" fill="#d0f8d0" />
            </pattern>
            <pattern id="dots" width="2" height="2" patternUnits="userSpaceOnUse">
                <rect width="2" height="2" fill="#f8f8f8" /><path d="M0 0h1v1H0zM1 1h1v1H1z" fill="#cccccc" />
            </pattern>
        </defs>
        <rect width="271" height="20" fill="url(#mesh)" />
        <rect x="272" width="7" height="20" fill="url(#dots)" />
        <path d="M0 19.500h280M271.500 0v20M279.500 0v20" stroke="#000" />
        <path d="M12 14.500h256" stroke="#000" />
        <path d="M10.500 12l1.500 2.500-1.500 2.500M266 12l2.500 2.500-2.500 2.500" fill="none" stroke="#000" strokeWidth=".8" />
        <circle cx="3.500" cy="14.500" r="2.500" /><circle cx="275.500" cy="14.500" r="2.500" />
    </svg>
);

const PageIcon = ({ plus }: { plus?: boolean }) => (
    <svg width={plus ? 16 : 14} height="14" viewBox={plus ? '0 0 16 14' : '2 0 14 14'}>
        <path d="M3 1h11.500v8l-4 4H3z" fill="#fbfae0" stroke="#6c6a3a" />
        <path d="M14.500 8.500h-4V13" fill="#e2dfae" stroke="#55532c" />
        <path d="M3 13.500h8l4-4V2" stroke="#222" fill="none" />
        {plus && <path d="M0 7h6M3 4v6.500" stroke="#3c3ca0" strokeWidth="1.900" />}
    </svg>
);
const GuideIcon = () => (
    <svg width="16" height="14" viewBox="0 0 16 14">
        <path d="M0 8h6M3 5v6" stroke="#4a48b0" strokeWidth="2" />
        <path d="M3.500 2h2M6.500.8h3M11 2.500h1.500M12.500 5.500v2" stroke="#e01010" strokeWidth="2.2" />
        <rect x="11" y="8" width="4.500" height="5" rx="1" fill="#2347d8" />
    </svg>
);
const FolderIcon = () => (
    <svg width="16" height="14" viewBox="0 0 16 14">
        <path d="M2.500 3V1h5v2h8v10h-13z" fill="#fbeeb0" stroke="#7a7030" />
        <path d="M3 13.500h12.500V4" stroke="#333" fill="none" />
        <path d="M0 8h6M3 5v6" stroke="#3c3ca0" strokeWidth="1.900" />
    </svg>
);
const TrashIcon = () => (
    <svg width="11" height="12" viewBox="0 0 11 12">
        <path d="M1 3.500h9l-.8 8H1.800z" fill="#a9cdea" stroke="#1f2f40" />
        <path d="M0 2.500h11M4 .8h3" stroke="#26333f" strokeWidth="1.400" />
        <path d="M3.500 4.500v6.500M5.500 4.500v6.500M7.500 4.500v6.500" stroke="#2c4a66" strokeWidth=".9" />
    </svg>
);
const EyeIcon = () => (
    <svg width="15" height="11" viewBox="0 0 15 11">
        <path d="M0 4C3-1 11-1 15 3l-1 2C10 1 5 1 1 5z" fill="#555" />
        <path d="M0 7c3-5 10-6 14-2l1 2c-2 4-10 4.500-13 1z" fill="#888" />
        <circle cx="8" cy="6.500" r="3.600" fill="#111" /><circle cx="7" cy="5.500" r=".7" fill="#fff" />
    </svg>
);
const LockIcon = () => (
    <svg width="11" height="14" viewBox="0 0 11 14">
        <path d="M2.500 7V3c0-3 6-3 6 0v4" fill="none" stroke="#4c5b42" strokeWidth="2.2" />
        <path d="M2.500 7V3c0-3 6-3 6 0v4" fill="none" stroke="#dfe9c8" strokeWidth=".9" />
        <rect x=".8" y="6.500" width="9.400" height="7" fill="#f8f6d4" stroke="#333" />
        <path d="M2 8.500h7M2 10.500h7M2 12.300h7" stroke="#3a78c2" strokeWidth="1" />
    </svg>
);
const LayerPencil = () => (
    <svg width="9" height="14" viewBox="0 0 9 14">
        <path d="M1 13l.5-4L6 1.500l2.500 1.500L4 10.500z" fill="#f7c62c" stroke="#5c3b10" strokeWidth=".8" />
        <path d="M5.500 2L7 0l2 1.200-1 2.500z" fill="#e69a9a" stroke="#6e3a3a" strokeWidth=".6" />
        <path d="M.5 14l.4-2.500 1.600 1z" fill="#000" />
    </svg>
);

const TimelinePanel = () => (
    <Timeline>
        <LayerHead>
            <Grip $w={5} $h={12} />
            <Space />
            <EyeIcon />
            <Space $size={6} />
            <LockIcon />
            <Space $size={7.5} />
            <svg width="11.500" height="12" viewBox="0 0 11.500 12">
                <path d="M0 0h11.500v12H0zM2 2v8.500h7.500V2z" fillRule="evenodd" />
                <path d="M2 2h7.500v8.500H2z" fill="#fff" />
            </svg>
        </LayerHead>
        <Gutter />
        <Ruler>
            <Playhead />
            <Numbers>
                {frameMarks.map(n => <FrameNumber key={n} $frames={n === 1 ? 4 : n === 65 ? 3 : 5}>{n}</FrameNumber>)}
            </Numbers>
        </Ruler>
        <RulerMenu><PanelMenu /></RulerMenu>
        <Layers>
            <LayerRow>
                <PageIcon />
                <LayerName>图层 1</LayerName>
                <LayerPencil />
                <Space />
                <Dot $right={15} />
                <Dot $right={12} />
                <GreenBox />
            </LayerRow>
        </Layers>
        <Frames>
            <FrameStrip>
                <Tween />
                {emptyFrames.map(n => <Frame key={n} $fifth={n % 5 === 0} />)}
            </FrameStrip>
            <PlayheadLine />
        </Frames>
        <ScrollBar vertical size={18} length={109} before={0} thumb={74} />
        <LayerTools>
            <PageIcon plus />
            <GuideIcon />
            <FolderIcon />
            <Space />
            <TrashIcon />
        </LayerTools>
        <StatusBar>
            <StatusButton $right={5}>
                <svg width="4" height="12" viewBox="0 0 4 12"><path d="M2 0v4M2 8v4" stroke="#e00" /><rect x=".8" y="4" width="2.400" height="4" fill="none" stroke="#e00" /></svg>
            </StatusButton>
            <StatusButton $right={0.5}><Onion a="#dcdcf6" b="#a3a2d8" /></StatusButton>
            <StatusButton $right={4.5}><Onion a="#fff" b="#fff" /></StatusButton>
            <StatusButton $right={5}><Onion a="#8584c0" b="#a3a2d8" /></StatusButton>
            <StatusButton $right={7.5}>
                <svg width="10" height="10" viewBox="0 0 10 10"><path d="M3 .6H.7v8.800H3M7 .6h2.300v8.800H7" fill="none" stroke="#55538e" strokeWidth="1.500" /><rect x="4" y="4" width="2" height="2" fill="#55538e" /></svg>
            </StatusButton>
            <StatusField $w={42} $right={7}>1</StatusField>
            <StatusField $w={70} $right={7}>12.0 fps</StatusField>
            <StatusField $w={56} $right={7}>0.0s</StatusField>
            <ScrollBar length={246} before={0.8} thumb={24} />
        </StatusBar>
    </Timeline>
);

/* ---------- stage ---------- */

const StageRow = styled.div`
    height: 291.5px;
    display: flex;
`;

const Pasteboard = styled.div`
    width: 719px;
    padding: 0 85px 0 84px;
    background: ${Color.Stage};
`;

const Stage = styled.div`
    height: 100%;
    padding: 103.5px 0 0 120px;
    background: #fff;
`;

const StageScroll = styled.div`
    display: flex;
    height: 17.5px;
    padding-top: 0.5px;
    background: ${Color.Face};
`;

const Splitter = styled.div`
    height: 7px;
    flex-shrink: 0;
    display: flex;
    justify-content: center;
`;

const SplitHandle = styled.div`
    width: 49px;
    height: 7px;
    display: flex;
    align-items: center;
    justify-content: center;
    background: #dfe3ea;
`;

/* ---------- bottom panels ---------- */

const PanelHeader = styled.div<{ $h?: number }>`
    height: ${p => p.$h || 20}px;
    flex-shrink: 0;
    display: flex;
    align-items: center;
    padding: 0 4px 1px;
    border-top: 1px solid #66758a;
    box-shadow: inset 0 1px 0 #e6ecf4, inset 0 -1px 0 #dfe5ee;
    background: linear-gradient(#b1c3da 45%, #c8d3e3);
`;

const HeaderText = styled.div<{ $left: number; $wide?: boolean }>`
    padding-left: ${p => p.$left}px;
    word-spacing: ${p => (p.$wide ? 3.8 : 0)}px;
    letter-spacing: ${p => (p.$wide ? 0.1 : 0)}px;
`;

const HeaderSeparator = styled.div`
    width: 1px;
    height: 12px;
    margin: 0 7.5px 0 7px;
    background: #7b8799;
`;

const PropTab = styled(TabShape)`
    align-self: flex-end;
    margin: 0 0 -1px 6px;
    padding-top: 2px;
`;

const PropRow = styled.div<{ $h: number; $line?: boolean }>`
    height: ${p => p.$h}px;
    flex-shrink: 0;
    display: flex;
    border-bottom: ${p => (p.$line ? `1px solid ${Color.Line}` : '0')};
    background: ${Color.Face};
    font-family: ${Font.tahoma};
`;

const PropSection = styled.div<{ $w: number; $first?: boolean; $top?: number; $bottom?: number; $left?: number }>`
    width: ${p => p.$w}px;
    margin: ${p => p.$top || 0}px 0 ${p => p.$bottom || 0}px;
    padding-left: ${p => p.$left || 0}px;
    border-left: ${p => (p.$first ? '0' : `1.8px solid ${Color.Line}`)};
    display: flex;
`;

const FieldColumn = styled.div<{ $top: number; $gap: number; $left?: number }>`
    display: flex;
    flex-direction: column;
    gap: ${p => p.$gap}px;
    padding: ${p => p.$top}px 0 0 ${p => p.$left || 0}px;
`;

const FieldRow = styled.div<{ $label?: number }>`
    display: flex;
    align-items: center;
    & > label {
        width: ${p => p.$label || 33}px;
        flex-shrink: 0;
    }
`;

const PushButton = styled.div`
    width: 48px;
    height: 19px;
    margin-left: 5px;
    border: 1px solid #c9c7ba;
    border-radius: 2px;
    background: #f5f4ea;
    color: ${Color.Line};
    line-height: 17px;
    text-align: center;
`;

const SideIcons = styled.div<{ $top: number; $gap: number }>`
    margin: ${p => p.$top}px 4px 0 auto;
    display: flex;
    flex-direction: column;
    align-items: flex-end;
    gap: ${p => p.$gap}px;
`;

const HelpMark = styled.div`
    width: 13px;
    height: 13px;
    flex-shrink: 0;
    border: 1px solid #444;
    border-radius: 50%;
    background: #e6e4e8;
    font: 700 9.5px/11px "Liberation Sans", sans-serif;
    text-align: center;
`;

const FrameThumb = () => (
    <svg width="36" height="36" viewBox="0 0 36 36">
        <rect width="36" height="36" fill="#e8e8e8" />
        <path d="M2 7.500h33M2 30h33M7 7v23M31 7v23" stroke="#a8a8a8" />
        <rect x="14.500" y="7" width="9" height="23" fill="#5c5c5c" />
        <path d="M19.500 1v34" stroke="#999" strokeWidth="1.4" />
        <g fill="#a5a5a5"><circle cx="3" cy="25.500" r="2.300" /><circle cx="10.700" cy="25.500" r="2.500" /><circle cx="26.500" cy="25.500" r="2.500" /><circle cx="33.500" cy="25.500" r="2" /></g>
        <circle cx="18.700" cy="25.500" r="2.500" fill="#e0e0e0" />
        <path d="M.5 36V.5H35" fill="none" stroke="#000" strokeWidth="1.3" /><path d="M.5 35.500h35V.5" fill="none" stroke="#fff" />
    </svg>
);

const PropertyPanel = () => (
    <>
        <PanelHeader>
            <Grip $w={5} $h={10} $pale />
            <Space $size={6.5} />
            <svg width="6" height="9" viewBox="0 0 6 9"><path d="M0 0l5.500 4.500L0 9z" /></svg>
            <HeaderText $left={4.5}>动作</HeaderText>
        </PanelHeader>
        <PanelHeader>
            <Grip $w={5} $h={10} $pale />
            <Space $size={5} />
            <svg width="9" height="6" viewBox="0 0 9 6"><path d="M0 0h9L4.500 6z" /></svg>
            <PropTab $w={41} $h={17.5} $slope={8}>属性</PropTab>
            <HeaderText $left={6.5}>滤镜</HeaderText>
            <HeaderSeparator />
            <HeaderText $left={0}>参数</HeaderText>
            <Space />
            <PanelMenu />
        </PanelHeader>
        <PropRow $h={60.5} $line>
            <PropSection $w={168} $first $left={5}>
                <FieldColumn $top={6.5} $gap={0}><FrameThumb /></FieldColumn>
                <FieldColumn $top={12.5} $gap={7.5} $left={18.8}>
                    <span>帧</span>
                    <Input $w={100.5} $h={21} $disabled />
                </FieldColumn>
            </PropSection>
            <PropSection $w={225} $top={4.5} $left={14}>
                <FieldColumn $top={1} $gap={0}>
                    <FieldRow><label>补间:</label><Combo w={98.5} disabled>无</Combo></FieldRow>
                </FieldColumn>
            </PropSection>
            <PropSection $w={343} $top={5.5} $left={11}>
                <FieldColumn $top={0} $gap={7}>
                    <FieldRow><label>声音:</label><Combo w={197.5} disabled>无</Combo></FieldRow>
                    <FieldRow><label>效果:</label><Combo w={142.5} disabled>无</Combo><PushButton>编辑...</PushButton></FieldRow>
                </FieldColumn>
                <SideIcons $top={-2} $gap={5.2}>
                    <HelpMark>?</HelpMark>
                    <svg width="13" height="13" viewBox="0 0 13 13"><circle cx="6.500" cy="6.500" r="6" fill="#fff" stroke="#333" /><path d="M4 3h6v6L8.500 7.500 5.500 10.500 3 9l3-3z" fill="#222" /></svg>
                </SideIcons>
            </PropSection>
        </PropRow>
        <PropRow $h={53}>
            <PropSection $w={168} $first>
                <FieldColumn $top={8.5} $gap={4.5} $left={60}>
                    <HeaderText $left={1.5}>标签类型:</HeaderText>
                    <Combo w={101.5} disabled>名称</Combo>
                </FieldColumn>
            </PropSection>
            <PropSection $w={225} $bottom={2} />
            <PropSection $w={343} $bottom={2} $left={11}>
                <FieldColumn $top={4} $gap={8}>
                    <FieldRow>
                        <label>同步:</label>
                        <Combo w={75} disabled>事件</Combo>
                        <Space $size={2.7} />
                        <Combo w={78} disabled>重复</Combo>
                        <Space $size={2} />
                        <Input $w={41} $h={21} $disabled>1</Input>
                    </FieldRow>
                    <FieldRow $label={32.5}><label /><span>没有选择声音</span></FieldRow>
                </FieldColumn>
                <SideIcons $top={3} $gap={28}>
                    <svg width="13" height="13" viewBox="0 0 13 13">
                        <circle cx="6.500" cy="6.500" r="6.500" fill="#1c5cb8" />
                        <circle cx="6.500" cy="2.600" r="1.300" fill="#fff" />
                        <path d="M2 4.500l3.500.7v2L3.800 11.500M11 4.500l-3.500.7v2l1.700 4.300M6.500 4.500v3.500" stroke="#fff" strokeWidth="1.500" fill="none" />
                    </svg>
                    <svg width="9" height="5" viewBox="0 0 9 5"><path d="M.8 4.500L4.500.7 8.200 4.500z" fill="#fff" stroke="#000" /></svg>
                </SideIcons>
            </PropSection>
        </PropRow>
    </>
);

const DocumentArea = () => (
    <Center>
        <DocWindow>
            <DocTabs>
                <DocTab $w={71} $h={18} $slope={8}>未命名<StarSuffix>-1*</StarSuffix></DocTab>
                <IdleTab>未命名<StarSuffix>-2*</StarSuffix></IdleTab>
                <WindowIcons>
                    <svg width="7" height="9" viewBox="0 0 7 9"><path d="M0 6.700h6.500V9H0z" /></svg>
                    <svg width="9" height="9" viewBox="0 0 9 9">
                        <path d="M3 3V1h5.500v5H7" fill="none" stroke="#000" strokeWidth="1.200" />
                        <path d="M2.500.8h6.200" stroke="#000" strokeWidth="1.600" />
                        <rect x=".6" y="4" width="5.600" height="4.500" fill="none" stroke="#000" strokeWidth="1.200" />
                        <path d="M0 4h6.700" stroke="#000" strokeWidth="1.600" />
                    </svg>
                    <svg width="9" height="9" viewBox="0 0 9 9"><path d="M.8.8l7 7.400M7.800.8l-7 7.400" stroke="#000" strokeWidth="2" /></svg>
                </WindowIcons>
            </DocTabs>
            <EditBar>
                <TimelineButton>时间轴</TimelineButton>
                <BarSeparator $left={4} $right={7} />
                <EditIcon $w={15}>
                    <svg width="14" height="15" viewBox="0 0 14 15"><path d="M0 9l6-5v3h8v4H6v3z" fill="#cfccbd" /></svg>
                </EditIcon>
                <BarSeparator $left={8} $right={11.5} />
                <EditIcon $w={19}><Clapper /></EditIcon>
                <SceneName>场景 1</SceneName>
                <BarSeparator $left={0} $right={3.5} />
                <EditIcon $w={27}><WithMark><Clapper /><DropMark /></WithMark></EditIcon>
                <EditIcon $w={27}><WithMark><Shapes /><DropMark /></WithMark></EditIcon>
                <ZoomField><Combo w={99.5} h={19.8}><Selected>100%</Selected></Combo></ZoomField>
            </EditBar>
            <TimelinePanel />
            <StageRow>
                <Pasteboard>
                    <Stage>
                        <svg width="54" height="74" viewBox="0 0 54 74">
                            <ellipse cx="27" cy="37" rx="26.200" ry="36.500" fill={Color.Red} stroke="#23204a" strokeWidth="1" />
                        </svg>
                    </Stage>
                </Pasteboard>
                <ScrollBar vertical length={291.5} before={109.5} thumb={39.5} />
            </StageRow>
            <StageScroll>
                <ScrollBar length={718.5} before={220} thumb={246} />
            </StageScroll>
        </DocWindow>
        <Splitter>
            <SplitHandle><svg width="7" height="3.500" viewBox="0 0 7 3.500"><path d="M0 0h7L3.500 3.500z" /></svg></SplitHandle>
        </Splitter>
        <PropertyPanel />
    </Center>
);

/* ---------- right panels ---------- */

const Side = styled.div`
    position: relative;
    width: 208px;
    flex-shrink: 0;
    display: flex;
    flex-direction: column;
    background: ${Color.Face};
    box-shadow: -1px 0 0 #43576a;
`;

const SideTabs = styled.div`
    height: 19px;
    flex-shrink: 0;
    display: flex;
    align-items: flex-end;
    background: ${Color.Tab};
`;

const Mixer = styled.div`
    height: 255px;
    flex-shrink: 0;
    padding: 3px 5px 0 3px;
    font-family: ${Font.tahoma};
`;

const MixerTop = styled.div`
    display: flex;
    align-items: center;
    height: 21px;
    margin-bottom: 8.5px;
`;

const TypeLabel = styled.div`
    width: 30.5px;
    margin-left: 35px;
`;

const ColorFields = styled.div`
    display: flex;
    margin-top: 6.5px;
`;

const Channels = styled.div`
    display: flex;
    flex-direction: column;
    gap: 1.3px;
    padding-top: 2px;
    width: 104px;
`;

const Channel = styled.div<{ $latin?: boolean }>`
    display: flex;
    align-items: center;
    & > label {
        width: 40.5px;
        margin-right: 1.7px;
        text-align: right;
        font-size: ${p => (p.$latin ? 11 : 12)}px;
    }
`;

const ChannelArrow = styled(ComboArrow)`
    width: 11px;
    height: 18px;
    margin-left: 0.7px;
    box-shadow: 0 0 0 0.7px #fff;
`;

const Spectrum = styled.div`
    width: 62px;
    height: 62px;
    margin-bottom: 2px;
    border: 1px solid;
    border-color: ${Color.Line} #fff #fff ${Color.Line};
    background:
        linear-gradient(rgba(70, 70, 70, 0), rgba(70, 70, 70, 0.6) 60%, #464646),
        linear-gradient(to right, #f00, #ff0 20%, #0f0 36%, #0ff 52%, #00f 70%, #f0f 86%, #f0004c);
`;

const HexField = styled.div`
    margin-left: -1.5px;
`;

const LumBar = styled.div`
    width: 20px;
    height: 62px;
    margin-left: 3.5px;
    border: 1px solid;
    border-color: ${Color.Line} #fff #fff ${Color.Line};
    background: linear-gradient(#fff, #ec5a54 38%, #e0281e 52%, #100000);
`;

const Preview = styled.div`
    width: 200px;
    height: 41px;
    margin-top: 31px;
    border: 1px solid;
    border-color: ${Color.Line} #fff #fff ${Color.Line};
    background: ${Color.Red};
`;

// Floating widget that hangs off the screen's right edge.
const Ball = styled.div`
    position: absolute;
    left: 195px;
    top: 114px;
    width: 37px;
    height: 37px;
    border: 1.5px solid #f4f4f4;
    border-radius: 50%;
    box-shadow: 0 0 1.5px 0.5px #8e8e86;
    background: radial-gradient(circle at 55% 40%, #63c463 0 25%, #1f9a24 45%, #12921a);
`;

const LibToolbar = styled.div`
    height: 29.5px;
    flex-shrink: 0;
    display: flex;
    align-items: center;
    padding: 0 7px 0.5px 4px;
`;

const LibInfo = styled.div`
    height: 19px;
    width: 207px;
    flex-shrink: 0;
    padding: 1.5px 0 0 3.5px;
    border: 1px solid;
    border-color: ${Color.Line} #fff #fff ${Color.Line};
`;

const LibPreview = styled.div`
    height: 90px;
    width: 207px;
    flex-shrink: 0;
    display: flex;
    justify-content: center;
    border: 1px solid;
    border-color: ${Color.Dark} ${Color.Face} ${Color.Face} ${Color.Dark};
    box-shadow: 0 -1px 0 ${Color.Line};
    margin-top: 0.5px;
    background: #fff;
`;

const LibGap = styled.div`
    height: 4.5px;
    flex-shrink: 0;
    border-top: 1px solid #fff;
    border-bottom: 1px solid ${Color.Face};
    background: linear-gradient(${Color.Face} 1px, #fff 1px 2px, ${Color.Face} 2px);
`;

const LibList = styled.div`
    height: 215.5px;
    flex-shrink: 0;
    display: flex;
    background: #fff;
`;

const ListMain = styled.div`
    width: 192px;
    flex-shrink: 0;
`;

const ListHead = styled.div`
    height: 17px;
    display: flex;
    border-bottom: 1px solid #000;
    background: ${Color.Face};
`;

const HeadCell = styled.div<{ $w: number; $sorted?: boolean }>`
    width: ${p => p.$w}px;
    padding: 0.5px 0 0 ${p => (p.$sorted ? 2.7 : 1.5)}px;
    border-top: 1px solid ${p => (p.$sorted ? Color.Line : '#fff')};
    border-right: ${p => (p.$sorted ? '1px solid #000' : '0')};
    border-left: 1px solid ${p => (p.$sorted ? Color.Line : '#fff')};
`;

const ListRow = styled.div`
    height: 20.5px;
    display: flex;
    align-items: center;
    padding: 0 7px 0 1px;
    border: 1px dotted #000;
    font-family: ${Font.tahoma};
`;

const ListSide = styled.div`
    width: 16px;
    flex-shrink: 0;
    display: flex;
    flex-direction: column;
    background: ${Color.Face};
`;

const ListButton = styled.div`
    height: 16.3px;
    display: flex;
    align-items: center;
    justify-content: center;
    border: 1px solid;
    border-color: #fff ${Color.Line} ${Color.Line} #fff;
`;

const LibFooter = styled.div`
    height: 18px;
    flex-shrink: 0;
    display: flex;
    align-items: center;
    padding-left: 2px;
`;

const Corner = styled.div`
    flex: 1;
    align-self: stretch;
    background: #fff;
`;

const SideHandle = styled.div`
    position: absolute;
    left: -7px;
    top: 320px;
    width: 7px;
    height: 48px;
    display: flex;
    align-items: center;
    justify-content: center;
    background: #dfe3ea;
`;

const channels = [['红:', '233'], ['绿:', '51'], ['蓝:', '43'], ['Alpha:', '100%']];

const SidePanels = () => (
    <Side>
        <PanelHeader>
            <Grip $w={5} $h={10} $pale />
            <Space $size={5} />
            <svg width="9" height="6" viewBox="0 0 9 6"><path d="M0 0h9L4.500 6z" /></svg>
            <HeaderText $left={3.3}>颜色</HeaderText>
            <Space />
            <PanelMenu />
        </PanelHeader>
        <SideTabs>
            <TabShape $w={53} $h={17} $slope={9}>混色器</TabShape>
            <IdleTab>颜色样本</IdleTab>
        </SideTabs>
        <Mixer>
            <MixerTop>
                <SwatchRow $left={0.5} $pad={6.5} $w={50} $round><StrokeIcon light /><Swatch none /></SwatchRow>
                <TypeLabel>类型:</TypeLabel>
                <Combo w={71}>纯色</Combo>
            </MixerTop>
            <SwatchRow $active $left={0.5} $pad={6.5} $w={50} $round><BucketIcon size={13} light /><Swatch color={Color.Red} /></SwatchRow>
            <MiniRow $left={4} $gap={5.5}><SwapColors /><NoColor red /><ExchangeIcon /></MiniRow>
            <ColorFields>
                <Channels>
                    {channels.map(([label, value]) => (
                        <Channel key={label} $latin={label === 'Alpha:'}>
                            <label>{label}</label>
                            <Input $w={42} $h={20}>{value}</Input>
                            <ChannelArrow><Chevron /></ChannelArrow>
                        </Channel>
                    ))}
                </Channels>
                <div>
                    <Spectrum>
                        <svg width="8" height="20" viewBox="0 0 8 20"><path d="M.5 7v4M.5 14v4" stroke="#000" strokeWidth="1.500" /><path d="M1.500 12.500h4" stroke="#fff" strokeWidth="1.2" /></svg>
                    </Spectrum>
                    <HexField><Input $w={63} $h={23} $font={10.5}>#E9332B</Input></HexField>
                </div>
                <LumBar />
                <FieldColumn $top={24} $gap={0} $left={0.5}>
                    <svg width="5" height="9" viewBox="0 0 5 9"><path d="M5 0v9L0 4.500z" /></svg>
                </FieldColumn>
            </ColorFields>
            <Preview />
        </Mixer>
        <PanelHeader $h={19.5}>
            <Grip $w={5} $h={10} $pale />
            <Space $size={5} />
            <svg width="9" height="6" viewBox="0 0 9 6"><path d="M0 0h9L4.500 6z" /></svg>
            <HeaderText $left={3.3} $wide>库 - 未命名-1</HeaderText>
            <Space />
            <PanelMenu />
        </PanelHeader>
        <LibToolbar>
            <Combo w={150}>未命名-1</Combo>
            <Space $size={6.5} />
            <svg width="14" height="11" viewBox="0 0 14 11">
                <path d="M0 5.500h6" stroke="#555" strokeWidth="1.600" />
                <path d="M5.200 1v9" stroke="#888" strokeWidth="1.500" />
                <rect x="6" y="3" width="4" height="5" fill="#f4f4f4" stroke="#888" />
                <path d="M8 .8h5v1.500h-1.500v6.400H13v1.500H8v-1.500h1.500V2.300H8z" fill="#ddd" stroke="#777" strokeWidth=".9" />
            </svg>
            <Space />
            <svg width="14" height="11" viewBox="0 0 14 11">
                <rect x=".5" y=".5" width="7" height="8" fill="#d3f3f6" stroke="#4c8c96" />
                <rect x="6.500" y="3" width="7" height="7.500" fill="#e8efff" stroke="#1c2850" />
                <path d="M3 6.500h6" stroke="#2440d8" strokeWidth="1.200" /><path d="M8.500 4l4 2.500-4 2.500z" fill="#2440d8" />
            </svg>
        </LibToolbar>
        <LibInfo>库中的一项</LibInfo>
        <LibPreview>
            <svg width="86" height="88" viewBox="0 0 86 88">
                <circle cx="43" cy="44" r="42.700" fill={Color.Red} stroke="#23204a" strokeWidth=".9" />
                <circle cx="50.500" cy="32.800" r="3.600" fill="#fff" />
                <path d="M46 32.800h9M50.500 28.300v9" stroke="#000" strokeWidth=".9" />
            </svg>
        </LibPreview>
        <LibGap />
        <LibList>
            <ListMain>
                <ListHead>
                    <HeadCell $w={150} $sorted>名称</HeadCell>
                    <HeadCell $w={42}>类型</HeadCell>
                </ListHead>
                <ListRow>
                    <svg width="14" height="15" viewBox="0 0 14 15">
                        <rect x=".6" y=".6" width="12.800" height="13" fill="#eef0ff" stroke="#5656b4" strokeWidth="1.200" />
                        <circle cx="5" cy="4.500" r="2.500" fill="#e8431c" />
                        <rect x="2" y="8" width="4" height="4.500" fill="#1c7f50" />
                        <path d="M9.500 5.500l2.500 5.500H7z" fill="#3a3ad0" />
                    </svg>
                    <HeaderText $left={8.5}>元件 1</HeaderText>
                    <Space />
                    <span>图形</span>
                </ListRow>
            </ListMain>
            <ListSide>
                <ListButton><svg width="8" height="8" viewBox="0 0 8 8"><path d="M3.500.5h1M2.500 3h3M1.500 5h5M0 7.300h8" stroke="#000" /></svg></ListButton>
                <ListButton><svg width="9" height="9" viewBox="0 0 9 9"><rect x=".5" y=".5" width="8" height="8" fill="#fff" stroke="#000" /><path d="M1 1.800h7" stroke="#aca899" /></svg></ListButton>
                <ListButton><svg width="5" height="8" viewBox="0 0 5 8"><rect x=".6" y=".6" width="4" height="7" fill="#fff" stroke="#aca899" strokeWidth="1.200" /></svg></ListButton>
                <ScrollBar vertical size={16} length={166.5} before={0.5} thumb={17} />
            </ListSide>
        </LibList>
        <LibFooter>
            <svg width="12" height="12" viewBox="0 0 12 12"><path d="M2.500.5h5l3.500 3.500v7.500H2.500z" fill="#fff" stroke="#222" /><path d="M0 6.500h5M2.500 4v5" stroke="#5a58c8" strokeWidth="1.600" /></svg>
            <Space $size={2} />
            <FolderIcon />
            <Space $size={3} />
            <svg width="10.500" height="11" viewBox="0 0 10.500 11"><ellipse cx="5.250" cy="5.500" rx="5.200" ry="5.500" fill="#10107a" /><path d="M5.500 2v1.600M4.200 5h1.500v3.500H7" stroke="#fff" strokeWidth="1.500" fill="none" /></svg>
            <Space $size={21} />
            <TrashIcon />
            <Space $size={2.3} />
            <ScrollBar length={111.5} before={1} thumb={23} />
            <Corner />
        </LibFooter>
        <SideHandle><svg width="4" height="8" viewBox="0 0 4 8"><path d="M0 0l4 4-4 4z" /></svg></SideHandle>
        <Ball />
    </Side>
);

/* ---------- taskbar ---------- */

const WindowEdge = styled.div`
    height: 1.5px;
    flex-shrink: 0;
    border-bottom: 0.8px solid #fff;
    background: ${Color.Line};
`;

const TaskBar = styled.div`
    flex: 1;
    display: flex;
    background: linear-gradient(#1c52c4 0, #3c86f2 1.5px, #3280ee 3px, #245edb 6px);
`;

const StartButton = styled.div`
    width: 94px;
    border-radius: 0 4px 0 0;
    background: linear-gradient(#2c7a2c, #56a656 2px, #3c963c 5px);
`;

const Tray = styled.div`
    width: 77px;
    margin-left: auto;
    border-left: 1px solid #0a3a86;
    background: linear-gradient(#0c68cc, #1cb4f0 2px, #14a0ea 5px);
`;

const menus = [
    ['文件', 'F'], ['编辑', 'E'], ['视图', 'V'], ['插入', 'I'], ['修改', 'M'],
    ['文本', 'T'], ['命令', 'C'], ['控制', 'O'], ['窗口', 'W'], ['帮助', 'H'],
];

const App = () => (
    <Slide>
        <GlobalStyle />
        <Heading>制作圆形变方形补间动画</Heading>
        <Desktop>
            <TitleBar>
                <svg width="16" height="17" viewBox="0 0 16 17">
                    <ellipse cx="8.500" cy="8.500" rx="7.600" ry="8" fill="#f0360e" stroke="#9c1a04" strokeWidth=".7" />
                    <ellipse cx="7.500" cy="4.500" rx="5" ry="3" fill="#fff" opacity=".35" />
                    <path d="M12.500 3.500c-3 0-3.500 3-4.200 5S7 13 4.500 13M7 8.300h4" stroke="#fff" strokeWidth="1.800" fill="none" />
                </svg>
                <TitleText>Macromedia Flash Professional 8 - [未命名-1*]</TitleText>
                <CaptionButton>
                    <svg width="13" height="13" viewBox="0 0 13 13"><path d="M1 9h7v3H1z" fill="#fff" /></svg>
                </CaptionButton>
                <CaptionButton>
                    <svg width="11" height="11" viewBox="0 0 11 11">
                        <path d="M3.500 3V1h6.500v6H8" stroke="#fff" strokeWidth="1.200" fill="none" />
                        <path d="M3 1.200h7.500M.3 4.500h7" stroke="#fff" strokeWidth="2" />
                        <rect x=".8" y="4" width="6" height="6" stroke="#fff" strokeWidth="1.200" fill="none" />
                    </svg>
                </CaptionButton>
                <CaptionButton $close>
                    <svg width="13" height="13" viewBox="0 0 13 13"><path d="M1.500 1.500l10 10M11.500 1.500l-10 10" stroke="#fff" strokeWidth="2.200" /></svg>
                </CaptionButton>
            </TitleBar>
            <MenuBar>
                {menus.map(([name, key]) => (
                    <MenuItem key={key}>{name}<Hotkey>(<u>{key}</u>)</Hotkey></MenuItem>
                ))}
            </MenuBar>
            <Body>
                <Toolbox />
                <DocumentArea />
                <SidePanels />
            </Body>
            <WindowEdge />
            <TaskBar>
                <StartButton />
                <Tray />
            </TaskBar>
        </Desktop>
    </Slide>
);

export default App;
